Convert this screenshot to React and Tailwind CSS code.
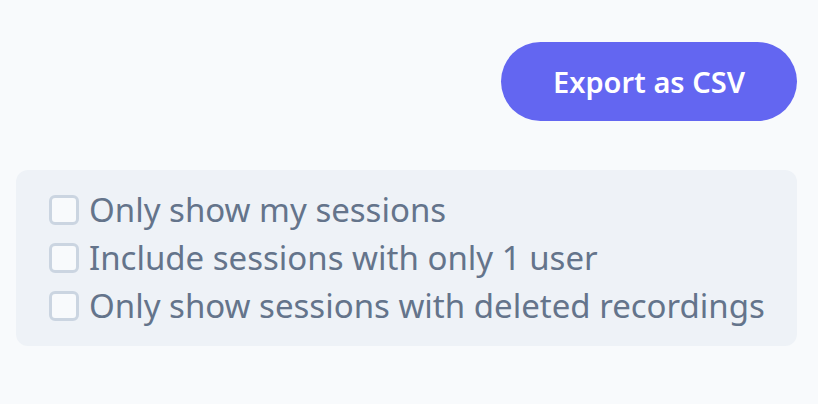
import { useState } from 'react'

const OPTIONS = [
  'Only show my sessions',
  'Include sessions with only 1 user',
  'Only show sessions with deleted recordings',
]

export default function App() {
  const [checked, setChecked] = useState([false, false, false])

  return (
    <div
      className="min-h-[404px] w-full bg-[#f8fafc] pl-4 pr-[21px] pt-[42px]"
      style={{ fontFamily: '"Noto Sans", "Open Sans", sans-serif' }}
    >
      <div className="flex justify-end">
        <button className="h-[79px] w-[296px] rounded-full bg-[#6366f1] text-[29px] font-semibold text-white">
          Export as CSV
        </button>
      </div>

      <div className="mt-[49px] flex h-[176px] flex-col justify-center gap-[1px] rounded-xl bg-[#eef2f7] pl-[33px]">
        {OPTIONS.map((label, i) => (
          <label key={label} className="flex h-[47px] items-center gap-[10px] text-[33px] leading-none text-[#64748b]">
            <input
              type="checkbox"
              checked={checked[i]}
              onChange={() => setChecked(c => c.map((v, j) => (j === i ? !v : v)))}
              className="h-[30px] w-[30px] shrink-0 appearance-none rounded-md border-[3px] border-[#cbd5e1] bg-[#f8fafc]"
            />
            <span className="-translate-y-[1px]">{label}</span>
          </label>
        ))}
      </div>
    </div>
  )
}
